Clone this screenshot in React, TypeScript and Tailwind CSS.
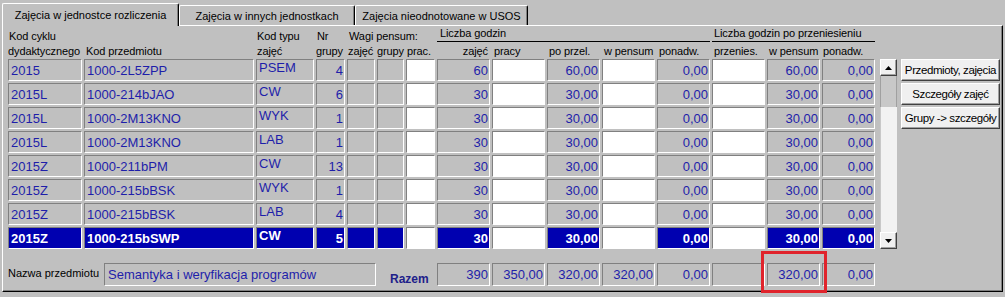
import type { ReactNode } from "react"

const FONT = "font-['Liberation_Sans',Arial,sans-serif]"

// szerokości kolumn tabeli (px): cykl, przedmiot, typ, nr, wagi x3, godziny x5, po przeniesieniu x3
const COLS = [
  "w-[74px]",
  "w-[170px]",
  "w-[58px]",
  "w-[29px]",
  "w-[28px]",
  "w-[27px]",
  "w-[29px]",
  "w-[53px]",
  "w-[53px]",
  "w-[53px]",
  "w-[53px]",
  "w-[53px]",
  "w-[53px]",
  "w-[53px]",
  "w-[53px]",
]

type Row = {
  cykl: string
  kod: string
  typ: string
  nr: string
  zaj: string
  poPrzel: string
  ponadw: string
  wPensum: string
  ponadw2: string
}

const rows: Row[] = [
  { cykl: "2015", kod: "1000-2L5ZPP", typ: "PSEM", nr: "4", zaj: "60", poPrzel: "60,00", ponadw: "0,00", wPensum: "60,00", ponadw2: "0,00" },
  { cykl: "2015L", kod: "1000-214bJAO", typ: "CW", nr: "6", zaj: "30", poPrzel: "30,00", ponadw: "0,00", wPensum: "30,00", ponadw2: "0,00" },
  { cykl: "2015L", kod: "1000-2M13KNO", typ: "WYK", nr: "1", zaj: "30", poPrzel: "30,00", ponadw: "0,00", wPensum: "30,00", ponadw2: "0,00" },
  { cykl: "2015L", kod: "1000-2M13KNO", typ: "LAB", nr: "1", zaj: "30", poPrzel: "30,00", ponadw: "0,00", wPensum: "30,00", ponadw2: "0,00" },
  { cykl: "2015Z", kod: "1000-211bPM", typ: "CW", nr: "13", zaj: "30", poPrzel: "30,00", ponadw: "0,00", wPensum: "30,00", ponadw2: "0,00" },
  { cykl: "2015Z", kod: "1000-215bBSK", typ: "WYK", nr: "1", zaj: "30", poPrzel: "30,00", ponadw: "0,00", wPensum: "30,00", ponadw2: "0,00" },
  { cykl: "2015Z", kod: "1000-215bBSK", typ: "LAB", nr: "4", zaj: "30", poPrzel: "30,00", ponadw: "0,00", wPensum: "30,00", ponadw2: "0,00" },
  { cykl: "2015Z", kod: "1000-215bSWP", typ: "CW", nr: "5", zaj: "30", poPrzel: "30,00", ponadw: "0,00", wPensum: "30,00", ponadw2: "0,00" },
]

const SELECTED = 7

function Cell({
  w,
  children,
  white,
  sel,
  right,
  top,
  h = "h-[22px]",
}: {
  w: string
  children?: ReactNode
  white?: boolean
  sel?: boolean
  right?: boolean
  top?: boolean
  h?: string
}) {
  const bg = white ? "bg-white" : sel ? "bg-[#0000b0] text-white font-bold" : "bg-[#c0c0c0] text-[#1e1eaa]"
  return (
    <div
      className={`${w} ${h} ${bg} shrink-0 flex ${top ? "items-start" : "items-center"} ${
        right ? "justify-end pr-[1px]" : "pl-[2px]"
      } border border-t-[#808080] border-l-[#808080] border-b-white border-r-white text-[13px] leading-[15px] whitespace-nowrap overflow-hidden`}
    >
      {children}
    </div>
  )
}

function Tab({ label, active, w }: { label: string; active?: boolean; w: string }) {
  return (
    <div
      className={`${w} ${
        active ? "h-[23px] pt-[4px] -mb-px relative z-10" : "h-[20px] pt-[3px]"
      } bg-[#c0c0c0] rounded-t-[2px] border-t border-l border-r border-t-white border-l-white border-r-black shadow-[inset_-1px_0_0_#808080] flex justify-center text-[11px] leading-[14px] text-black whitespace-nowrap`}
    >
      {label}
    </div>
  )
}

function Arrow({ up }: { up?: boolean }) {
  return (
    <div className="h-[17px] bg-[#f0f0f0] border border-white border-r-[#404040] border-b-[#404040] shadow-[inset_-1px_-1px_0_#a0a0a0] flex items-center justify-center">
      <svg width="7" height="4" viewBox="0 0 7 4">
        {up ? <polygon points="3.5,0 7,4 0,4" fill="#000" /> : <polygon points="0,0 7,0 3.5,4" fill="#000" />}
      </svg>
    </div>
  )
}

function Btn({ label }: { label: string }) {
  return (
    <button className="h-[22px] w-[99px] bg-[#f0f0f0] border border-white border-r-[#404040] border-b-[#404040] shadow-[inset_-1px_-1px_0_#a0a0a0] text-[11.5px] tracking-[-0.4px] leading-[14px] text-black whitespace-nowrap">
      {label}
    </button>
  )
}

export default function App() {
  return (
    <div className={`${FONT} relative w-[1005px] h-[297px] bg-[#c0c0c0] overflow-hidden`}>
      <div className="h-[25px] flex items-end pl-[2px]">
        <Tab w="w-[177px]" label="Zajęcia w jednostce rozliczenia" active />
        <Tab w="w-[176px]" label="Zajęcia w innych jednostkach" />
        <Tab w="w-[173px]" label="Zajęcia nieodnotowane w USOS" />
      </div>

      <div className="ml-[2px] w-[1001px] h-[267px] border border-t-white border-l-white border-r-black border-b-black shadow-[inset_-1px_-1px_0_#808080] pl-[5px]">
        {/* nagłówek */}
        <div className="text-[11px] leading-[14px] tracking-[-0.1px] text-black whitespace-nowrap">
          <div className="h-[17px] flex gap-[2px] items-end">
            <div className={`${COLS[0]} pl-[1px]`}>Kod cyklu</div>
            <div className={COLS[1]} />
            <div className={`${COLS[2]} pl-[1px]`}>Kod typu</div>
            <div className={`${COLS[3]} pl-[1px]`}>Nr</div>
            <div className="w-[88px] pl-[2px]">Wagi pensum:</div>
            <div className="w-[273px] pl-[3px] h-[16px] border-b border-black mb-[1px]">Liczba godzin</div>
            <div className="w-[163px] pl-[2px] h-[16px] border-b border-black mb-[1px]">Liczba godzin po przeniesieniu</div>
          </div>
          <div className="h-[16px] flex gap-[2px] items-start pt-[1px]">
            <div className={COLS[0]}>dydaktycznego</div>
            <div className={`${COLS[1]} pl-[2px]`}>Kod przedmiotu</div>
            <div className={`${COLS[2]} pl-[1px]`}>zajęć</div>
            <div className={COLS[3]}>grupy</div>
            <div className={`${COLS[4]} pl-[1px]`}>zajęć</div>
            <div className={COLS[5]}>grupy</div>
            <div className={`${COLS[6]} pl-[1px]`}>prac.</div>
            <div className={`${COLS[7]} text-right pr-[2px]`}>zajęć</div>
            <div className={`${COLS[8]} pl-[2px]`}>pracy</div>
            <div className={`${COLS[9]} pl-[2px]`}>po przel.</div>
            <div className={`${COLS[10]} pl-[2px]`}>w pensum</div>
            <div className={`${COLS[11]} pl-[2px]`}>ponadw.</div>
            <div className={`${COLS[12]} pl-[2px]`}>przenies.</div>
            <div className={`${COLS[13]} pl-[2px]`}>w pensum</div>
            <div className={`${COLS[14]} pl-[1px]`}>ponadw.</div>
          </div>
        </div>

        {/* wiersze + przewijanie + przyciski */}
        <div className="flex">
          <div className="flex flex-col gap-[2px]">
            {rows.map((r, i) => {
              const s = i === SELECTED
              return (
                <div key={i} className="flex gap-[2px]">
                  <Cell w={COLS[0]} sel={s}>{r.cykl}</Cell>
                  <Cell w={COLS[1]} sel={s}>{r.kod}</Cell>
                  <Cell w={COLS[2]} sel={s} top>{r.typ}</Cell>
                  <Cell w={COLS[3]} sel={s} right>{r.nr}</Cell>
                  <Cell w={COLS[4]} sel={s} />
                  <Cell w={COLS[5]} sel={s} />
                  <Cell w={COLS[6]} white />
                  <Cell w={COLS[7]} sel={s} right>{r.zaj}</Cell>
                  <Cell w={COLS[8]} white />
                  <Cell w={COLS[9]} sel={s} right>{r.poPrzel}</Cell>
                  <Cell w={COLS[10]} white />
                  <Cell w={COLS[11]} sel={s} right>{r.ponadw}</Cell>
                  <Cell w={COLS[12]} white />
                  <Cell w={COLS[13]} sel={s} right>{r.wPensum}</Cell>
                  <Cell w={COLS[14]} sel={s} right>{r.ponadw2}</Cell>
                </div>
              )
            })}
          </div>

          <div className="ml-[5px] w-[17px] h-[190px] flex flex-col">
            <Arrow up />
            <div className="h-[31px] bg-[#c8c8c8] border-x border-[#a0a0a0]" />
            <div className="flex-1 bg-[#f2f2f2] border-l border-[#c8c8c8]" />
            <Arrow />
          </div>

          <div className="ml-[4px] flex flex-col gap-[2px]">
            <Btn label="Przedmioty, zajęcia" />
            <Btn label="Szczegóły zajęć" />
            <Btn label="Grupy -> szczegóły" />
          </div>
        </div>

        {/* stopka */}
        <div className="mt-[14px] flex h-[23px]">
          <div className="w-[96px] pt-[3px] text-[11px] leading-[14px] text-black whitespace-nowrap">Nazwa przedmiotu</div>
          <Cell w="w-[272px]" h="h-[23px]">
            <span className="pl-[1px]">Semantyka i weryfikacja programów</span>
          </Cell>
          <div className="w-[61px] self-end pl-[14px] text-[12px] leading-[14px] font-bold text-[#20208a]">Razem</div>
          <div className="flex gap-[2px]">
            <Cell w={COLS[7]} h="h-[23px]" right>390</Cell>
            <Cell w={COLS[8]} h="h-[23px]" right>350,00</Cell>
            <Cell w={COLS[9]} h="h-[23px]" right>320,00</Cell>
            <Cell w={COLS[10]} h="h-[23px]" right>320,00</Cell>
            <Cell w={COLS[11]} h="h-[23px]" right>0,00</Cell>
            <Cell w={COLS[12]} h="h-[23px]" />
            <Cell w={COLS[13]} h="h-[23px]" right>320,00</Cell>
            <Cell w={COLS[14]} h="h-[23px]" right>0,00</Cell>
          </div>
        </div>
      </div>

      {/* czerwona ramka wyróżnienia */}
      <div className="absolute left-[761px] top-[251px] w-[66px] h-[42px] border-[3px] border-[#e0242c]" />
    </div>
  )
}
